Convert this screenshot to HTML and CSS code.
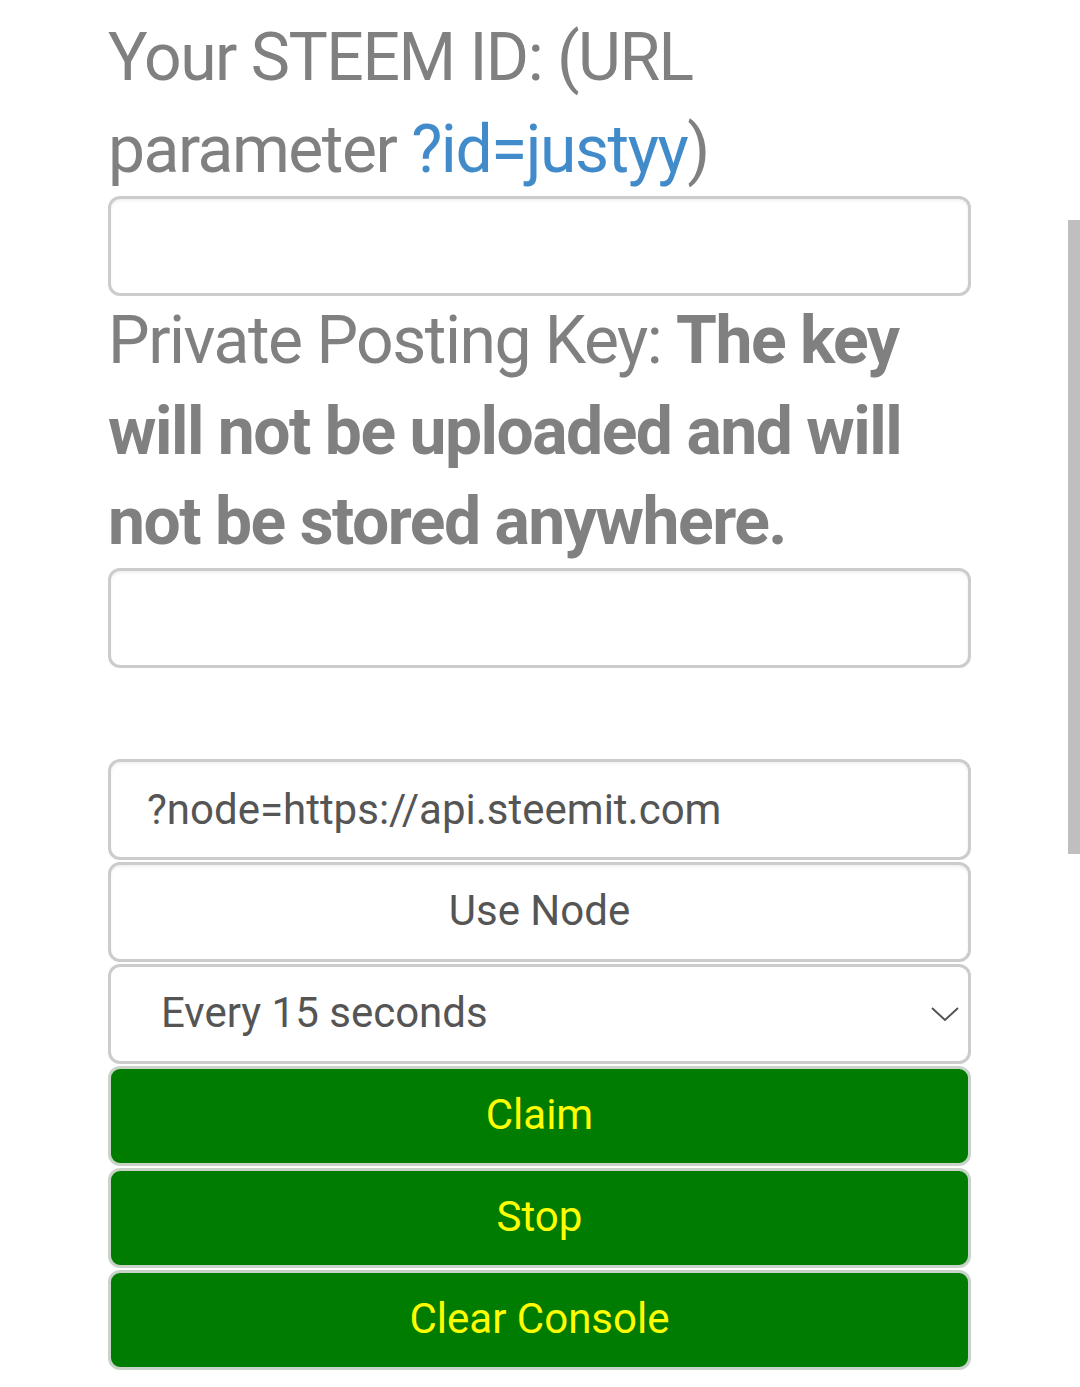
FILE: index.html
```html
<!DOCTYPE html>
<html lang="en">
<head>
<meta charset="utf-8">
<title>Claim</title>
<link rel="stylesheet" href="styles.css">
</head>
<body>
<main class="form">
  <label class="label first">Your STEEM ID: (URL parameter <a class="link" href="#">?id=justyy</a>)</label>
  <input class="field top" type="text">
  <label class="label second">Private Posting Key: <b>The key will not be uploaded and will not be stored anywhere.</b></label>
  <input class="field top" type="password">
  <div class="spacer"></div>
  <input class="field node" type="text" value="?node=https://api.steemit.com">
  <button class="btn plain">Use Node</button>
  <div class="select-wrap">
    <select class="select">
      <option>Every 15 seconds</option>
    </select>
    <svg class="chevron" width="28" height="16" viewBox="0 0 28 16"><path d="M1 2 L14 14 L27 2" fill="none" stroke="#555" stroke-width="2"/></svg>
  </div>
  <button class="btn green">Claim</button>
  <button class="btn green">Stop</button>
  <button class="btn green">Clear Console</button>
</main>
<div class="scrollbar"></div>
</body>
</html>
```
FILE: styles.css
```css
html, body {
  margin: 0;
  padding: 0;
  background: #fff;
}
body {
  font-family: Roboto, "Liberation Sans", sans-serif;
  overflow: hidden;
}
.form {
  width: 863px;
  margin-left: 108px;
  padding-top: 12px;
  display: flex;
  flex-direction: column;
}
.label {
  display: block;
  font-size: 66px;
  line-height: 92px;
  color: #808080;
  font-weight: 400;
  letter-spacing: -1.5px;
}
.label.second {
  line-height: 90.67px;
}
.label b {
  font-weight: 700;
}
.link {
  color: #428bca;
  text-decoration: none;
}
.field, .btn, .select {
  box-sizing: border-box;
  width: 863px;
  height: 100px;
  border: 3px solid #cccccc;
  border-radius: 12px;
  background: #fff;
  font-family: Roboto, "Liberation Sans", sans-serif;
  font-size: 42px;
  color: #555;
  margin: 0 0 2px 0;
  box-shadow: inset 0 2px 3px rgba(0,0,0,0.06);
}
.field {
  padding: 0 36px;
  outline: none;
}
.field.top {
  margin-bottom: 0;
}
.spacer {
  height: 91px;
}
.node {
  height: 101px;
}
.btn {
  text-align: center;
  padding: 0 0 4px 0;
}
.plain {
  color: #555;
}
.select-wrap {
  position: relative;
  margin-bottom: 2px;
}
.select {
  display: block;
  margin: 0;
  appearance: none;
  -webkit-appearance: none;
  padding: 0 50px 4px 50px;
  box-shadow: none;
}
.chevron {
  position: absolute;
  right: 12px;
  top: 42px;
}
.green {
  background: #007c00;
  color: #ffff00;
  border-color: #c9d3c9;
  box-shadow: none;
}
.scrollbar {
  position: absolute;
  left: 1068px;
  top: 220px;
  width: 12px;
  height: 634px;
  background: #bfbfbf;
}
```
